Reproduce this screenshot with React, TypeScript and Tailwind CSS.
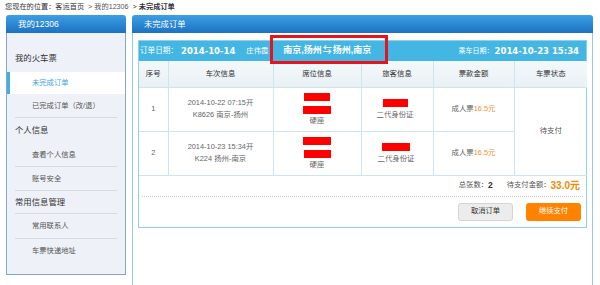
import React from "react";

const SubItem = ({ label, h, line = true, active = false }: { label: string; h: string; line?: boolean; active?: boolean }) => (
  <div className={`relative ${h} flex items-center pl-[25px] text-[7.3px] ${active ? "text-[#3aa3e3]" : "text-[#555]"}`}>
    <span>{label}</span>
    {line && <div className="absolute left-[8px] right-[8px] bottom-0 h-px bg-[#d6dbe2]" />}
  </div>
);

const Heading = ({ label, h, line = false }: { label: string; h: string; line?: boolean }) => (
  <div className={`relative ${h} flex items-center pl-[8px] text-[8.4px] text-[#333]`}>
    <span>{label}</span>
    {line && <div className="absolute left-[8px] right-[8px] bottom-0 h-px bg-[#d6dbe2]" />}
  </div>
);

const Bar = ({ w }: { w: string }) => <div className={`${w} h-[8px] bg-[#ff0000]`} />;

export default function App() {
  return (
    <div className="w-[600px] h-[285px] overflow-hidden bg-white font-['Liberation_Sans','Noto_Sans_CJK_SC',sans-serif] text-[#333]">
      <div className="h-[14px] pl-[5px] pt-[1px] text-[7.2px] leading-[12px] text-[#333]">
        您现在的位置：客运首页 <span className="text-[#555]">&nbsp;&gt; 我的12306&nbsp;</span> &gt; <b>未完成订单</b>
      </div>
      <div className="flex pl-[6px] pt-[1px] gap-[6px]">
        {/* left panel */}
        <div className="w-[120px] h-[260px] flex flex-col rounded-t-[3px] overflow-hidden">
          <div className="h-[18px] shrink-0 bg-gradient-to-b from-[#3d9fe2] to-[#1b72c2] text-white text-[8.5px] flex items-center pl-[12px]">
            我的12306
          </div>
          <div className="flex-1 bg-[#eef2f8] border border-t-0 border-[#7ea8cc] pt-[13px]">
            <Heading label="我的火车票" h="h-[24px]" />
            <div className="mt-[2px] relative h-[22px] bg-white flex items-center pl-[25px] text-[7.3px] text-[#3aa3e3]">
              <div className="absolute left-0 top-0 bottom-0 w-[3px] bg-[#3fb0e0]" />
              未完成订单
            </div>
            <SubItem label="已完成订单（改/退）" h="h-[24px]" />
            <Heading label="个人信息" h="h-[25px]" />
            <SubItem label="查看个人信息" h="h-[24px]" />
            <SubItem label="账号安全" h="h-[24px]" />
            <Heading label="常用信息管理" h="h-[23px]" line />
            <SubItem label="常用联系人" h="h-[25px]" />
            <SubItem label="车票快递地址" h="h-[24px]" line={false} />
          </div>
        </div>

        {/* right panel */}
        <div className="w-[461px] h-[275px] flex flex-col rounded-t-[3px] overflow-hidden">
          <div className="h-[18px] shrink-0 bg-gradient-to-b from-[#3d9fe2] to-[#1b72c2] text-white text-[8.3px] flex items-center pl-[12px]">
            未完成订单
          </div>
          <div className="flex-1 border border-t-0 border-[#9cc7e6] px-[5px] pt-[7px]">
            <div className="border border-[#8fd0e6]">
              {/* cyan bar */}
              <div className="relative h-[20px] bg-[#43b6e3] flex items-center text-white pl-[1px] pr-[7px]">
                <span className="text-[7.6px]">订单日期：</span>
                <span className="ml-[3px] font-['DejaVu_Sans',sans-serif] font-bold text-[8.5px]">2014-10-14</span>
                <span className="ml-[11px] text-[7.3px]">庄伟霞</span>
                <span className="ml-[15px] font-bold text-[9px]">南京,扬州<span className="mx-[1px]">⇆</span>扬州,南京</span>
                <span className="flex-1" />
                <span className="text-[7px]">乘车日期：</span>
                <span className="ml-[1px] font-['DejaVu_Sans',sans-serif] font-bold text-[8.5px]">2014-10-23 15:34</span>
                <div className="pointer-events-none absolute left-[131px] top-[-6px] w-[118px] h-[29px] border-[3px] border-[#e8141c]" />
              </div>
              <table className="w-full table-fixed border-collapse text-[7.4px] text-[#666]">
                <colgroup>
                  <col className="w-[29px]" />
                  <col className="w-[105px]" />
                  <col className="w-[88px]" />
                  <col className="w-[72px]" />
                  <col className="w-[81px]" />
                  <col className="w-[73px]" />
                </colgroup>
                <thead>
                  <tr className="h-[26px] bg-gradient-to-b from-[#f4f8fa] to-[#e9f1f5] text-[#333]">
                    {["序号", "车次信息", "席位信息", "旅客信息", "票款金额", "车票状态"].map((t, i) => (
                      <th key={t} className={`font-normal border-b border-[#cfe4ec] ${i > 0 ? "border-l" : ""}`}>{t}</th>
                    ))}
                  </tr>
                </thead>
                <tbody>
                  <tr className="h-[44px]">
                    <td className="text-center border-b border-[#cfe4ec]">1</td>
                    <td className="text-center border-l border-b border-[#cfe4ec] leading-[12px]">
                      2014-10-22 07:15开<br />K8626 南京-扬州
                    </td>
                    <td className="border-l border-b border-[#cfe4ec]">
                      <div className="flex flex-col items-center">
                        <Bar w="w-[26px]" />
                        <div className="mt-[5px]"><Bar w="w-[28px]" /></div>
                        <div className="mt-[2px] leading-[10px]">硬座</div>
                      </div>
                    </td>
                    <td className="border-l border-b border-[#cfe4ec]">
                      <div className="flex flex-col items-center pr-[4px]">
                        <Bar w="w-[25px]" />
                        <div className="mt-[3px] leading-[10px]">二代身份证</div>
                      </div>
                    </td>
                    <td className="text-center border-l border-b border-[#cfe4ec]">
                      成人票<span className="text-[#f0901e]">16.5元</span>
                    </td>
                    <td rowSpan={2} className="text-center border-l border-b border-[#cfe4ec] text-[#555]">待支付</td>
                  </tr>
                  <tr className="h-[44px]">
                    <td className="text-center border-b border-[#cfe4ec]">2</td>
                    <td className="text-center border-l border-b border-[#cfe4ec] leading-[12px]">
                      2014-10-23 15:34开<br />K224 扬州-南京
                    </td>
                    <td className="border-l border-b border-[#cfe4ec]">
                      <div className="flex flex-col items-center">
                        <Bar w="w-[28px]" />
                        <div className="mt-[5px]"><Bar w="w-[27px]" /></div>
                        <div className="mt-[2px] leading-[10px]">硬座</div>
                      </div>
                    </td>
                    <td className="border-l border-b border-[#cfe4ec]">
                      <div className="flex flex-col items-center pr-[2px]">
                        <Bar w="w-[28px]" />
                        <div className="mt-[3px] leading-[10px]">二代身份证</div>
                      </div>
                    </td>
                    <td className="text-center border-l border-b border-[#cfe4ec]">
                      成人票<span className="text-[#f0901e]">16.5元</span>
                    </td>
                  </tr>
                </tbody>
              </table>
              <div className="mx-[3px] h-[21px] border-b border-dotted border-[#c8c8c8] flex items-center justify-end pr-[3px] text-[7.3px] text-[#555]">
                <span>总张数：</span>
                <span className="font-bold text-[8.5px] text-[#333]">2</span>
                <span className="ml-[14px]">待支付金额：</span>
                <span className="font-bold text-[10px] text-[#f08a00]">33.0元</span>
              </div>
              <div className="flex justify-end gap-[13px] pt-[6px] pb-[6px] pr-[5px]">
                <div className="w-[55px] h-[18px] rounded-[3px] bg-[#ececec] border border-[#d4d4d4] flex items-center justify-center text-[7.3px] text-[#333]">
                  取消订单
                </div>
                <div className="w-[55px] h-[18px] rounded-[3px] bg-[#ff8200] flex items-center justify-center text-[7.3px] text-white">
                  继续支付
                </div>
              </div>
            </div>
          </div>
        </div>
      </div>
    </div>
  );
}
